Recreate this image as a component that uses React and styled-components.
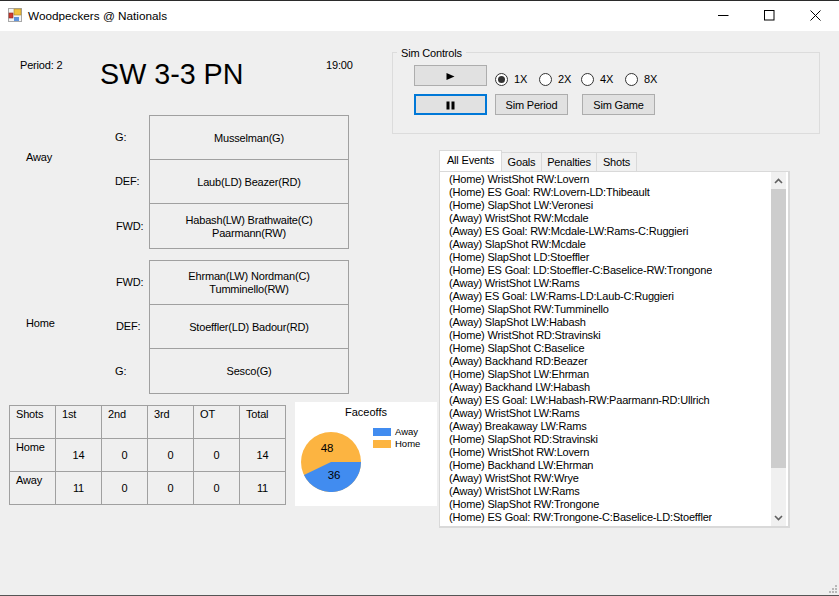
import React from 'react';
import styled, { createGlobalStyle } from 'styled-components';

const GlobalStyle = createGlobalStyle`
  html, body { margin: 0; padding: 0; }
  body { font-family: "Liberation Sans", Arial, sans-serif; font-size: 11px; letter-spacing: -0.18px; color: #000; }
`;

const Window = styled.div`
  width: 839px;
  height: 596px;
  box-sizing: border-box;
  display: flex;
  flex-direction: column;
  position: relative;
  overflow: hidden;
  background: #efefef;
  border-top: 1px solid #2b2b2b;
  border-bottom: 1px solid #555;
`;

const TitleBar = styled.div`
  height: 30px;
  box-sizing: border-box;
  flex: none;
  display: flex;
  align-items: center;
  background: #fff;
  padding: 0 1px 2px 8px;
`;

const TitleText = styled.span`
  margin-left: 6px;
  font-size: 11.75px;
  letter-spacing: 0;
  flex: 1;
`;

const WinButton = styled.div`
  width: 46px;
  height: 28px;
  display: flex;
  align-items: center;
  justify-content: center;
`;

const Body = styled.div`
  flex: 1;
  display: grid;
  grid-template-columns: 392px 1fr;
`;

const LeftColumn = styled.div`
  padding-left: 9px;
`;

const ScoreRow = styled.div`
  height: 84px;
  display: grid;
  grid-template-columns: 91px 226px auto;
  align-items: start;
`;

const SmallInfo = styled.div`
  padding-top: 28px;
  padding-left: ${p => p.$indent || 0}px;
`;

const Score = styled.div`
  font-size: 28.7px;
  letter-spacing: 0;
  line-height: 34px;
  padding-top: 26px;
`;

const LineupBlock = styled.div`
  display: grid;
  grid-template-columns: 89px 34px 200px;
  margin-left: 17px;
  margin-bottom: 11px;
`;

const TeamLabel = styled.div`
  position: relative;
  top: ${p => p.$top}px;
`;

const PositionColumn = styled.div`
  display: grid;
  grid-template-rows: ${p => p.$rows};
`;

const PositionLabel = styled.div`
  display: flex;
  align-items: center;
  padding-left: ${p => p.$indent || 0}px;
`;

const LineupTable = styled.div`
  display: grid;
  grid-template-rows: ${p => p.$rows};
  border: 1px solid #a0a0a0;
  border-bottom: 0;
`;

const LineupCell = styled.div`
  display: flex;
  align-items: center;
  justify-content: center;
  text-align: center;
  line-height: 13px;
  border-bottom: 1px solid #a0a0a0;
  padding: 1px 20px 0;
`;

const BottomRow = styled.div`
  display: flex;
  align-items: flex-start;
  gap: 9px;
  margin-top: -3px;
`;

const ShotsTable = styled.div`
  flex: none;
  margin-top: 3px;
  width: 277px;
  box-sizing: border-box;
  display: grid;
  grid-template-columns: repeat(6, 46px);
  grid-auto-rows: 33px;
  border-left: 1px solid #a0a0a0;
  border-top: 1px solid #a0a0a0;
`;

const ShotCell = styled.div`
  box-sizing: border-box;
  border-right: 1px solid #a0a0a0;
  border-bottom: 1px solid #a0a0a0;
  padding: ${p => (p.$value ? '10px 0 0 0' : '2px 0 0 6px')};
  line-height: 13px;
  text-align: ${p => (p.$value ? 'center' : 'left')};
`;

const ChartCard = styled.div`
  flex: none;
  width: 142px;
  height: 104px;
  background: #fff;
  display: grid;
  grid-template-columns: 78px 1fr;
  grid-template-rows: 24px 1fr;
`;

const ChartTitle = styled.div`
  grid-column: 1 / 3;
  text-align: center;
  padding-top: 4px;
  letter-spacing: 0;
`;

const PieBox = styled.div`
  padding: 6px 0 0 6px;
`;

const Legend = styled.div`
  padding-top: 1px;
  display: flex;
  flex-direction: column;
  gap: 2px;
`;

const LegendItem = styled.div`
  display: flex;
  align-items: center;
  gap: 4px;
  font-size: 9.5px;
  letter-spacing: 0;
  line-height: 10px;
`;

const Swatch = styled.span`
  width: 18px;
  height: 8px;
  background: ${p => p.$color};
`;

const RightColumn = styled.div`
  padding-top: 14px;
`;

const GroupBox = styled.fieldset`
  width: 428px;
  height: 89px;
  box-sizing: border-box;
  margin: 0;
  padding: 0;
  border: 1px solid #dcdcdc;
`;

const GroupLegend = styled.legend`
  margin-left: 4px;
  padding: 2px 4px 0;
  line-height: 13px;
`;

const ControlsRow = styled.div`
  display: flex;
  align-items: center;
  margin-top: ${p => p.$top}px;
  padding-left: 21px;
`;

const Button = styled.div`
  width: 73px;
  height: 21px;
  box-sizing: border-box;
  padding-top: 1px;
  margin-left: ${p => p.$left || 0}px;
  display: flex;
  align-items: center;
  justify-content: center;
  background: #e1e1e1;
  border: ${p => (p.$focused ? '2px solid #0078d7' : '1px solid #adadad')};
`;

const RadioGroup = styled.div`
  display: flex;
  margin: 7px 0 0 8px;
`;

const Radio = styled.div`
  display: flex;
  align-items: center;
  width: ${p => p.$width}px;
  gap: 6px;
`;

const RadioCircle = styled.span`
  width: 13px;
  height: 13px;
  box-sizing: border-box;
  border-radius: 50%;
  border: 1px solid #333;
  background: #fff;
  display: flex;
  align-items: center;
  justify-content: center;
  &::after {
    content: '';
    display: ${p => (p.$checked ? 'block' : 'none')};
    width: 7px;
    height: 7px;
    border-radius: 50%;
    background: #333;
  }
`;

const TabPanel = styled.div`
  margin: 16px 0 0 47px;
  width: 351px;
`;

const TabStrip = styled.div`
  display: flex;
  align-items: flex-end;
  height: 21px;
`;

const Tab = styled.div`
  box-sizing: border-box;
  width: ${p => p.$width}px;
  height: ${p => (p.$active ? 21 : 19)}px;
  background: ${p => (p.$active ? '#fff' : '#f0f0f0')};
  border: 1px solid #d9d9d9;
  border-bottom: 0;
  margin-right: -1px;
  text-align: center;
  line-height: 18px;
  position: relative;
  z-index: ${p => (p.$active ? 1 : 0)};
`;

const ListBox = styled.div`
  height: 357px;
  box-sizing: border-box;
  background: #fff;
  border: 1px solid #d9d9d9;
  border-right-width: 2px;
  border-bottom-width: 2px;
  display: flex;
  justify-content: space-between;
`;

const EventList = styled.div`
  padding: 1px 0 0 9px;
  white-space: nowrap;
  line-height: 13px;
  overflow: hidden;
`;

const ScrollBar = styled.div`
  width: 15px;
  height: 100%;
  margin-right: 2px;
  background: #f0f0f0;
  display: flex;
  flex-direction: column;
  align-items: center;
`;

const ScrollArrow = styled.div`
  height: 17px;
  flex: none;
  display: flex;
  align-items: center;
  justify-content: center;
`;

const ScrollThumb = styled.div`
  width: 100%;
  height: 279px;
  flex: none;
  background: #cdcdcd;
`;

const ScrollTrack = styled.div`
  flex: 1;
`;

const ResizeGrip = styled.svg`
  position: absolute;
  right: 1px;
  bottom: 1px;
`;

const AppIcon = () => (
  <svg width="14" height="14" viewBox="0 0 14 14">
    <rect x="0.5" y="0.5" width="13" height="13" fill="#f4f4f4" stroke="#a8a8a8" />
    <rect x="6" y="1" width="7" height="6" fill="#f2c23e" stroke="#a8862c" strokeWidth="0.6" />
    <rect x="1" y="5" width="4" height="5" fill="#cf3a30" stroke="#8a2a24" strokeWidth="0.6" />
    <rect x="6" y="9" width="5" height="4" fill="#5f93dc" />
  </svg>
);

const events = [
  '(Home) WristShot RW:Lovern',
  '(Home) ES Goal: RW:Lovern-LD:Thibeault',
  '(Home) SlapShot LW:Veronesi',
  '(Away) WristShot RW:Mcdale',
  '(Away) ES Goal: RW:Mcdale-LW:Rams-C:Ruggieri',
  '(Away) SlapShot RW:Mcdale',
  '(Home) SlapShot LD:Stoeffler',
  '(Home) ES Goal: LD:Stoeffler-C:Baselice-RW:Trongone',
  '(Away) WristShot LW:Rams',
  '(Away) ES Goal: LW:Rams-LD:Laub-C:Ruggieri',
  '(Home) SlapShot RW:Tumminello',
  '(Away) SlapShot LW:Habash',
  '(Home) WristShot RD:Stravinski',
  '(Home) SlapShot C:Baselice',
  '(Away) Backhand RD:Beazer',
  '(Home) SlapShot LW:Ehrman',
  '(Away) Backhand LW:Habash',
  '(Away) ES Goal: LW:Habash-RW:Paarmann-RD:Ullrich',
  '(Away) WristShot LW:Rams',
  '(Away) Breakaway LW:Rams',
  '(Home) SlapShot RD:Stravinski',
  '(Home) WristShot RW:Lovern',
  '(Home) Backhand LW:Ehrman',
  '(Away) WristShot RW:Wrye',
  '(Away) WristShot LW:Rams',
  '(Home) SlapShot RW:Trongone',
  '(Home) ES Goal: RW:Trongone-C:Baselice-LD:Stoeffler',
];

const shotRows = [
  ['Shots', '1st', '2nd', '3rd', 'OT', 'Total'],
  ['Home', '14', '0', '0', '0', '14'],
  ['Away', '11', '0', '0', '0', '11'],
];

const tabs = [
  { label: 'All Events', width: 63, active: true },
  { label: 'Goals', width: 41 },
  { label: 'Penalties', width: 56 },
  { label: 'Shots', width: 41 },
];

const speeds = [
  { label: '1X', width: 44, checked: true },
  { label: '2X', width: 42 },
  { label: '4X', width: 44 },
  { label: '8X', width: 44 },
];

// pie slice for Away, running clockwise from 3 o'clock
const pieAngle = (36 / 84) * Math.PI * 2;
const pieEnd = [30 + 30 * Math.cos(pieAngle), 30 + 30 * Math.sin(pieAngle)];

const Lineup = ({ team, teamTop, rows, heights }) => (
  <LineupBlock>
    <TeamLabel $top={teamTop}>{team}</TeamLabel>
    <PositionColumn $rows={heights}>
      {rows.map(r => (
        <PositionLabel key={r.pos} $indent={r.indent}>{r.pos}</PositionLabel>
      ))}
    </PositionColumn>
    <LineupTable $rows={heights}>
      {rows.map(r => (
        <LineupCell key={r.pos}>{r.names}</LineupCell>
      ))}
    </LineupTable>
  </LineupBlock>
);

export default function App() {
  return (
    <Window>
      <GlobalStyle />
      <TitleBar>
        <AppIcon />
        <TitleText>Woodpeckers @ Nationals</TitleText>
        <WinButton>
          <svg width="11" height="11"><path d="M0 5.5H10.5" stroke="#000" /></svg>
        </WinButton>
        <WinButton>
          <svg width="11" height="11"><rect x="0.5" y="0.5" width="9.5" height="9.5" fill="none" stroke="#000" /></svg>
        </WinButton>
        <WinButton>
          <svg width="11" height="11"><path d="M0.5 0.5L10.5 10.5M10.5 0.5L0.5 10.5" stroke="#000" /></svg>
        </WinButton>
      </TitleBar>
      <Body>
        <LeftColumn>
          <ScoreRow>
            <SmallInfo $indent={11}>Period: 2</SmallInfo>
            <Score>SW 3-3 PN</Score>
            <SmallInfo>19:00</SmallInfo>
          </ScoreRow>
          <Lineup
            team="Away"
            teamTop={36}
            heights="44px 44px 45px"
            rows={[
              { pos: 'G:', names: 'Musselman(G)' },
              { pos: 'DEF:', names: 'Laub(LD) Beazer(RD)' },
              { pos: 'FWD:', indent: 1, names: 'Habash(LW) Brathwaite(C) Paarmann(RW)' },
            ]}
          />
          <Lineup
            team="Home"
            teamTop={57}
            heights="44px 44px 45px"
            rows={[
              { pos: 'FWD:', indent: 1, names: 'Ehrman(LW) Nordman(C) Tumminello(RW)' },
              { pos: 'DEF:', indent: 1, names: 'Stoeffler(LD) Badour(RD)' },
              { pos: 'G:', names: 'Sesco(G)' },
            ]}
          />
          <BottomRow>
            <ShotsTable>
              {shotRows.map((row, i) =>
                row.map((cell, j) => (
                  <ShotCell key={`${i}-${j}`} $value={i > 0 && j > 0}>{cell}</ShotCell>
                ))
              )}
            </ShotsTable>
            <ChartCard>
              <ChartTitle>Faceoffs</ChartTitle>
              <PieBox>
                <svg width="60" height="60" viewBox="0 0 60 60" fontFamily="Liberation Sans" fontSize="11.5">
                  <circle cx="30" cy="30" r="30" fill="#fcb441" />
                  <path d={`M30 30L60 30A30 30 0 0 1 ${pieEnd[0]} ${pieEnd[1]}Z`} fill="#418cf0" />
                  <text x="26" y="20" textAnchor="middle">48</text>
                  <text x="33" y="47" textAnchor="middle">36</text>
                </svg>
              </PieBox>
              <Legend>
                <LegendItem><Swatch $color="#418cf0" />Away</LegendItem>
                <LegendItem><Swatch $color="#fcb441" />Home</LegendItem>
              </Legend>
            </ChartCard>
          </BottomRow>
        </LeftColumn>
        <RightColumn>
          <GroupBox>
            <GroupLegend>Sim Controls</GroupLegend>
            <ControlsRow $top={5}>
              <Button>
                <svg width="9" height="9"><path d="M0.5 1L8.5 4.5L0.5 8Z" fill="#000" /></svg>
              </Button>
              <RadioGroup>
                {speeds.map(s => (
                  <Radio key={s.label} $width={s.width}>
                    <RadioCircle $checked={s.checked} />
                    {s.label}
                  </Radio>
                ))}
              </RadioGroup>
            </ControlsRow>
            <ControlsRow $top={8}>
              <Button $focused>
                <svg width="9" height="9"><path d="M0.5 0.5H3.5V8.5H0.5ZM5.5 0.5H8.5V8.5H5.5Z" fill="#000" /></svg>
              </Button>
              <Button $left={8}>Sim Period</Button>
              <Button $left={14}>Sim Game</Button>
            </ControlsRow>
          </GroupBox>
          <TabPanel>
            <TabStrip>
              {tabs.map(t => (
                <Tab key={t.label} $width={t.width} $active={t.active}>{t.label}</Tab>
              ))}
            </TabStrip>
            <ListBox>
              <EventList>
                {events.map((e, i) => <div key={i}>{e}</div>)}
              </EventList>
              <ScrollBar>
                <ScrollArrow>
                  <svg width="9" height="6"><path d="M1 5L4.5 1.5L8 5" fill="none" stroke="#606060" strokeWidth="1.6" /></svg>
                </ScrollArrow>
                <ScrollThumb />
                <ScrollTrack />
                <ScrollArrow>
                  <svg width="9" height="6"><path d="M1 1L4.5 4.5L8 1" fill="none" stroke="#606060" strokeWidth="1.6" /></svg>
                </ScrollArrow>
              </ScrollBar>
            </ListBox>
          </TabPanel>
        </RightColumn>
      </Body>
      <ResizeGrip width="10" height="10" fill="#b8b8b8">
        <rect x="7" y="1" width="2" height="2" />
        <rect x="4" y="4" width="2" height="2" />
        <rect x="7" y="4" width="2" height="2" />
        <rect x="1" y="7" width="2" height="2" />
        <rect x="4" y="7" width="2" height="2" />
        <rect x="7" y="7" width="2" height="2" />
      </ResizeGrip>
    </Window>
  );
}
